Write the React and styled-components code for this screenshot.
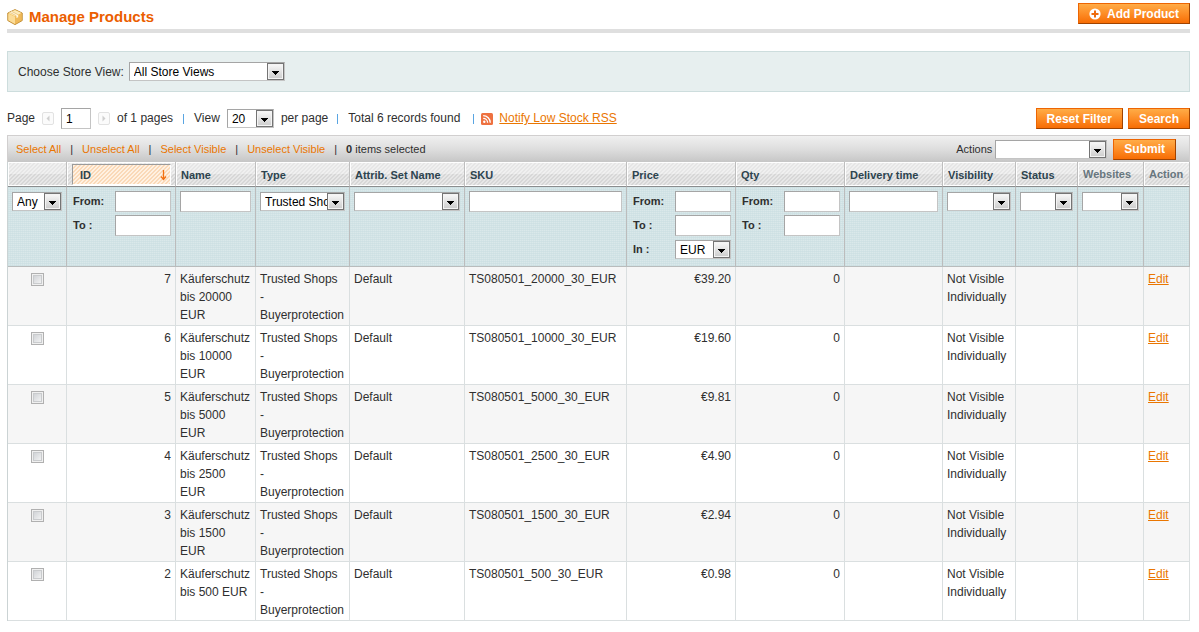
import React from "react";
import styled, { createGlobalStyle, css } from "styled-components";

const Global = createGlobalStyle`
  *, *::before, *::after { box-sizing: border-box; }
  body {
    margin: 0;
    background: #fff;
    color: #2f2f2f;
    font: 12px/18px Arial, "Liberation Sans", sans-serif;
  }
  button, input, select { font: inherit; margin: 0; }
`;

const Page = styled.main`
  min-width: 1120px;
  padding: 2px 9px 8px 7px;
`;

const TitleBar = styled.header`
  display: flex;
  align-items: center;
  justify-content: space-between;
  height: 31px;
  padding-bottom: 4px;
  border-bottom: 4px solid #dfdfdf;
`;

const Title = styled.h1`
  display: flex;
  align-items: center;
  gap: 6px;
  margin: 0;
  padding-top: 6px;
  color: #eb5e00;
  font-size: 15px;
  line-height: 20px;
`;

const Button = styled.button`
  display: inline-flex;
  align-items: center;
  gap: 6px;
  height: 21px;
  padding: 0 10px;
  border: 1px solid;
  border-color: #ed6502 #a04300 #a04300 #ed6502;
  border-radius: 0;
  background: linear-gradient(#ffac47, #fd8d26 50%, #f76d05);
  color: #fff;
  font-weight: bold;
  white-space: nowrap;
  cursor: pointer;
`;

const StoreSwitcher = styled.section`
  display: flex;
  align-items: center;
  gap: 5px;
  height: 41px;
  margin-top: 18px;
  padding: 0 10px;
  border: 1px solid #cddddd;
  background: #e7efef;
`;

const SelectBox = styled.span`
  position: relative;
  display: ${(p) => (p.$fill ? "block" : "inline-block")};
  flex: none;
  width: ${(p) => (p.$fill ? "100%" : `${p.$width}px`)};
  height: 19px;
  ${(p) => p.$offset && css`margin-top: 1px;`}

  select {
    display: block;
    width: 100%;
    height: 19px;
    padding: 1px 17px 0 4px;
    border: 1px solid;
    border-color: #a5a5a5 #c4c4c4 #c4c4c4 #a5a5a5;
    border-radius: 0;
    outline: 0;
    appearance: none;
    background: #fff;
    color: #000;
    line-height: 16px;
    text-overflow: clip;
  }

  svg {
    position: absolute;
    top: 1px;
    right: 1px;
    pointer-events: none;
  }
`;

function Select({ options = [""], ...rest }) {
  const { width, fill, offset, ...attrs } = rest;
  return (
    <SelectBox $width={width} $fill={fill} $offset={offset}>
      <select {...attrs}>
        {options.map((o) => (
          <option key={o}>{o}</option>
        ))}
      </select>
      <svg width="17" height="17" viewBox="0 0 17 17" aria-hidden="true">
        <defs>
          <linearGradient id="arrowFace" x1="0" y1="0" x2="0" y2="1">
            <stop offset="0" stopColor="#f6f6f6" />
            <stop offset="1" stopColor="#cfcfcf" />
          </linearGradient>
        </defs>
        <rect x="0.5" y="0.5" width="16" height="16" fill="#f4f4f4" stroke="#747474" />
        <rect x="2" y="2" width="13" height="13" fill="url(#arrowFace)" />
        <path d="M5 8h7v1h-1v1h-1v1H9v1H8v-1H7v-1H6V9H5z" fill="#000" />
      </svg>
    </SelectBox>
  );
}

const TextInput = styled.input`
  display: block;
  width: ${(p) => (p.$width ? `${p.$width}px` : "100%")};
  height: 21px;
  padding: 0 4px;
  border: 1px solid;
  border-color: #a5a5a5 #c4c4c4 #c4c4c4 #a5a5a5;
  border-radius: 0;
  outline: 0;
  background: #fff;
  color: #000;
`;

const PagerRow = styled.section`
  display: flex;
  align-items: center;
  justify-content: space-between;
  height: 21px;
  margin: 16px 0 6px;
`;

const Pager = styled.div`
  display: flex;
  align-items: center;
  gap: ${(p) => p.$gap || 0}px;
  white-space: nowrap;

  label, span, a { line-height: 16px; padding-bottom: 1px; }
`;

const PageStep = styled.button`
  display: grid;
  place-items: center;
  width: 12px;
  height: 13px;
  padding: 0;
  border: 1px solid #e2e2e2;
  border-radius: 2px;
  background: #fbfbfb;
`;

const Divider = styled.i`
  width: 1px;
  height: 10px;
  margin: 1px ${(p) => p.$right}px 0 ${(p) => p.$left}px;
  background: #59a5e2;
`;

const Link = styled.a`
  color: #ea7601;
`;

const MassAction = styled.div`
  display: flex;
  align-items: center;
  justify-content: space-between;
  height: 27px;
  padding: 0 13px 0 8px;
  border: 1px solid #d1cfcf;
  border-bottom: 0;
  background: linear-gradient(#f0f0f0, #dedede 50%, #c6c6c6);
  font-size: 11px;
`;

const MassLinks = styled.div`
  display: flex;
  align-items: center;
  gap: 9px;

  a { color: #ea7601; text-decoration: none; }
`;

const MassForm = styled.div`
  display: flex;
  align-items: center;
  gap: 3px;

  button { margin-left: 3px; font-size: 12px; }
`;

const Grid = styled.table`
  width: 100%;
  table-layout: fixed;
  border-collapse: separate;
  border-spacing: 0;
  border-left: 1px solid #cbd3d4;
`;

const stripes = (a, b) => css`
  linear-gradient(135deg, ${a} 25%, ${b} 25% 50%, ${a} 50% 75%, ${b} 75%) 0 0 / 4px 4px
`;

const Th = styled.th`
  height: 25px;
  padding: ${(p) => (p.$sorted ? "2px 4px 1px 5px" : "2px 4px 0 5px")};
  border-right: 1px solid #bebebe;
  border-bottom: 1px solid #8b8d8e;
  background:
    linear-gradient(#fff, #fff) 0 0 / 100% 1px no-repeat,
    linear-gradient(#fff, #fff) 0 100% / 100% 1px no-repeat,
    linear-gradient(#fff, #fff) 0 0 / 1px 100% no-repeat,
    ${stripes("#ffffff66", "#ffffff00")},
    linear-gradient(#e6e6e6 48%, #d7d7d7 48%);
  color: ${(p) => (p.$plain ? "#67767e" : "#2d444f")};
  font-size: 11px;
  line-height: 16px;
  text-align: left;
  vertical-align: ${(p) => (p.$plain ? "top" : "middle")};
  white-space: nowrap;
  ${(p) => p.$plain && css`padding-top: 4px;`}
`;

const SortButton = styled.button`
  display: flex;
  align-items: center;
  justify-content: space-between;
  width: 100%;
  height: 21px;
  padding: 0 3px 0 7px;
  border: 1px solid;
  border-color: #9b9b9b #fff #fff #9b9b9b;
  background: ${stripes("#fff1e2", "#fad9b8")};
  color: #2d444f;
  font-weight: bold;
`;

const FilterCell = styled.td`
  height: 80px;
  padding: 4px;
  border-right: 1px solid #bcbcbc;
  border-bottom: 1px solid #b9bcbc;
  background:
    linear-gradient(90deg, #cbdfe280 50%, #cbdfe200 50%) 0 0 / 2px 2px,
    linear-gradient(#d0e2e5 50%, #dae8ea 50%) 0 0 / 2px 2px;
  vertical-align: top;
`;

const Range = styled.div`
  display: grid;
  gap: 3px;
`;

const RangeLine = styled.label`
  display: flex;
  align-items: center;
  justify-content: space-between;
  height: 21px;
  padding-left: 2px;
  font-size: 11px;
  font-weight: bold;
  line-height: 17px;
  white-space: pre;

  input, select { font-size: 12px; font-weight: normal; }
`;

const Row = styled.tr`
  background: ${(p) => (p.$even ? "#f6f6f6" : "#fff")};
`;

const Cell = styled.td`
  height: 59px;
  padding: 3px 4px 1px;
  border-right: 1px solid #dadfe0;
  border-bottom: 1px solid #dadfe0;
  text-align: ${(p) => p.$align || "left"};
  vertical-align: top;
`;

const Check = styled.input`
  display: block;
  width: 13px;
  height: 13px;
  margin: 3px auto 0;
  appearance: none;
  border: 1px solid #b0b0b0;
  background: linear-gradient(135deg, #c8cbcf, #fafafa);
  box-shadow: inset 0 0 0 1px #f0f0f0, inset 0 0 0 2px #c9cbcd;
`;

function BoxIcon() {
  return (
    <svg width="16" height="16" viewBox="0 0 16 16" aria-hidden="true">
      <path d="M8 .6 15.2 4v7.6L8 15.6.8 11.6V4z" fill="#f2b94b" stroke="#b98328" strokeWidth=".9" strokeLinejoin="round" />
      <path d="M8 1.1 14.6 4 8 7.5 1.3 4.1z" fill="#fde9b4" />
      <path d="M8 7.6 14.7 4.3v7L8 15z" fill="#efb95a" />
      <path d="M1.3 4.4 8 7.7V15l-6.7-3.7z" fill="#fbdc98" />
      <path d="m4.6 2.6 6.6 3.2v2.4l-1.8.9V6.8L2.9 3.5z" fill="#fff6dc" />
      <path d="m5 2.6 6.2 3.2M3.2 3.5 9 6.6" stroke="#d9a450" strokeWidth=".5" fill="none" />
    </svg>
  );
}

function AddIcon() {
  return (
    <svg width="12" height="12" viewBox="0 0 12 12" aria-hidden="true">
      <circle cx="6" cy="6" r="5.6" fill="#fff" />
      <path d="M6 2.5v7M2.5 6h7" stroke="#ee6b0c" strokeWidth="2" />
    </svg>
  );
}

function RssIcon() {
  return (
    <svg width="12" height="12" viewBox="0 0 12 12" aria-hidden="true">
      <rect width="12" height="12" rx="1.5" fill="#ee7140" />
      <circle cx="3.3" cy="8.8" r="1.2" fill="#fff" />
      <path d="M2.2 5.4a4.4 4.4 0 0 1 4.4 4.4M2.2 2.7a7.1 7.1 0 0 1 7.1 7.1" fill="none" stroke="#fff" strokeWidth="1.3" />
    </svg>
  );
}

function SortArrow() {
  return (
    <svg width="7" height="12" viewBox="0 0 7 12" aria-hidden="true">
      <path d="M3.5 1v9M1 7.5l2.5 3 2.5-3" fill="none" stroke="#f3700f" strokeWidth="1.3" />
    </svg>
  );
}

function StepArrow({ back }) {
  return (
    <svg width="4" height="7" viewBox="0 0 4 7" aria-hidden="true">
      <path d={back ? "M3.5 .5v6l-3-3z" : "M.5 .5v6l3-3z"} fill="#cfcfcf" />
    </svg>
  );
}

const columns = [
  { label: "", width: 59 },
  { label: "ID", width: 109, sorted: true },
  { label: "Name", width: 80 },
  { label: "Type", width: 94 },
  { label: "Attrib. Set Name", width: 115 },
  { label: "SKU" },
  { label: "Price", width: 109 },
  { label: "Qty", width: 109 },
  { label: "Delivery time", width: 98 },
  { label: "Visibility", width: 73 },
  { label: "Status", width: 62 },
  { label: "Websites", width: 66, plain: true },
  { label: "Action", width: 46, plain: true },
];

const products = [
  { id: 7, amount: 20000, price: "€39.20" },
  { id: 6, amount: 10000, price: "€19.60" },
  { id: 5, amount: 5000, price: "€9.81" },
  { id: 4, amount: 2500, price: "€4.90" },
  { id: 3, amount: 1500, price: "€2.94" },
  { id: 2, amount: 500, price: "€0.98" },
];

function RangeFilter({ currency }) {
  return (
    <Range>
      <RangeLine>From:<TextInput $width={56} /></RangeLine>
      <RangeLine>To :<TextInput $width={56} /></RangeLine>
      {currency && (
        <RangeLine>In :<Select width={56} options={["EUR"]} /></RangeLine>
      )}
    </Range>
  );
}

export default function App() {
  return (
    <>
      <Global />
      <Page>
        <TitleBar>
          <Title><BoxIcon />Manage Products</Title>
          <Button type="button"><AddIcon />Add Product</Button>
        </TitleBar>

        <StoreSwitcher>
          <label htmlFor="store">Choose Store View:</label>
          <Select id="store" width={156} options={["All Store Views"]} />
        </StoreSwitcher>

        <PagerRow>
          <Pager>
            <Pager $gap={7}>
              <label htmlFor="page">Page</label>
              <PageStep type="button" aria-label="Previous page"><StepArrow back /></PageStep>
              <TextInput id="page" $width={30} defaultValue="1" />
              <PageStep type="button" aria-label="Next page"><StepArrow /></PageStep>
              <span>of 1 pages</span>
            </Pager>
            <Divider $left={10} $right={10} />
            <Pager $gap={7}>
              <label htmlFor="limit">View</label>
              <Select id="limit" width={47} options={["20"]} />
              <span>per page</span>
            </Pager>
            <Divider $left={9} $right={10} />
            <span>Total 6 records found</span>
            <Divider $left={13} $right={7} />
            <Pager $gap={6}>
              <RssIcon />
              <Link href="#rss">Notify Low Stock RSS</Link>
            </Pager>
          </Pager>
          <Pager $gap={5}>
            <Button type="button">Reset Filter</Button>
            <Button type="button">Search</Button>
          </Pager>
        </PagerRow>

        <MassAction>
          <MassLinks>
            <a href="#all">Select All</a><span>|</span>
            <a href="#none">Unselect All</a><span>|</span>
            <a href="#visible">Select Visible</a><span>|</span>
            <a href="#hidden">Unselect Visible</a><span>|</span>
            <span><strong>0</strong> items selected</span>
          </MassLinks>
          <MassForm>
            <label htmlFor="actions">Actions</label>
            <Select id="actions" width={112} />
            <Button type="button">Submit</Button>
          </MassForm>
        </MassAction>

        <Grid>
          <colgroup>
            {columns.map((c, i) => (
              <col key={i} width={c.width} />
            ))}
          </colgroup>
          <thead>
            <tr>
              {columns.map((c, i) => (
                <Th key={i} $sorted={c.sorted} $plain={c.plain}>
                  {c.sorted ? (
                    <SortButton type="button">{c.label}<SortArrow /></SortButton>
                  ) : (
                    c.label
                  )}
                </Th>
              ))}
            </tr>
          </thead>
          <tbody>
            <tr>
              <FilterCell><Select fill offset aria-label="Selected" options={["Any"]} /></FilterCell>
              <FilterCell><RangeFilter /></FilterCell>
              <FilterCell><TextInput aria-label="Name" /></FilterCell>
              <FilterCell><Select fill offset aria-label="Type" options={["Trusted Shops - Buyerprotection"]} /></FilterCell>
              <FilterCell><Select fill offset aria-label="Attribute set" /></FilterCell>
              <FilterCell><TextInput aria-label="SKU" /></FilterCell>
              <FilterCell><RangeFilter currency /></FilterCell>
              <FilterCell><RangeFilter /></FilterCell>
              <FilterCell><TextInput aria-label="Delivery time" /></FilterCell>
              <FilterCell><Select fill offset aria-label="Visibility" /></FilterCell>
              <FilterCell><Select fill offset aria-label="Status" /></FilterCell>
              <FilterCell><Select fill offset aria-label="Websites" /></FilterCell>
              <FilterCell />
            </tr>
            {products.map((p, i) => (
              <Row key={p.id} $even={i % 2 === 0}>
                <Cell><Check type="checkbox" aria-label={`Select product ${p.id}`} /></Cell>
                <Cell $align="right">{p.id}</Cell>
                <Cell>{`Käuferschutz bis ${p.amount} EUR`}</Cell>
                <Cell>Trusted Shops<br />-<br />Buyerprotection</Cell>
                <Cell>Default</Cell>
                <Cell>{`TS080501_${p.amount}_30_EUR`}</Cell>
                <Cell $align="right">{p.price}</Cell>
                <Cell $align="right">0</Cell>
                <Cell />
                <Cell>Not Visible Individually</Cell>
                <Cell />
                <Cell />
                <Cell><Link href={`#edit-${p.id}`}>Edit</Link></Cell>
              </Row>
            ))}
          </tbody>
        </Grid>
      </Page>
    </>
  );
}
